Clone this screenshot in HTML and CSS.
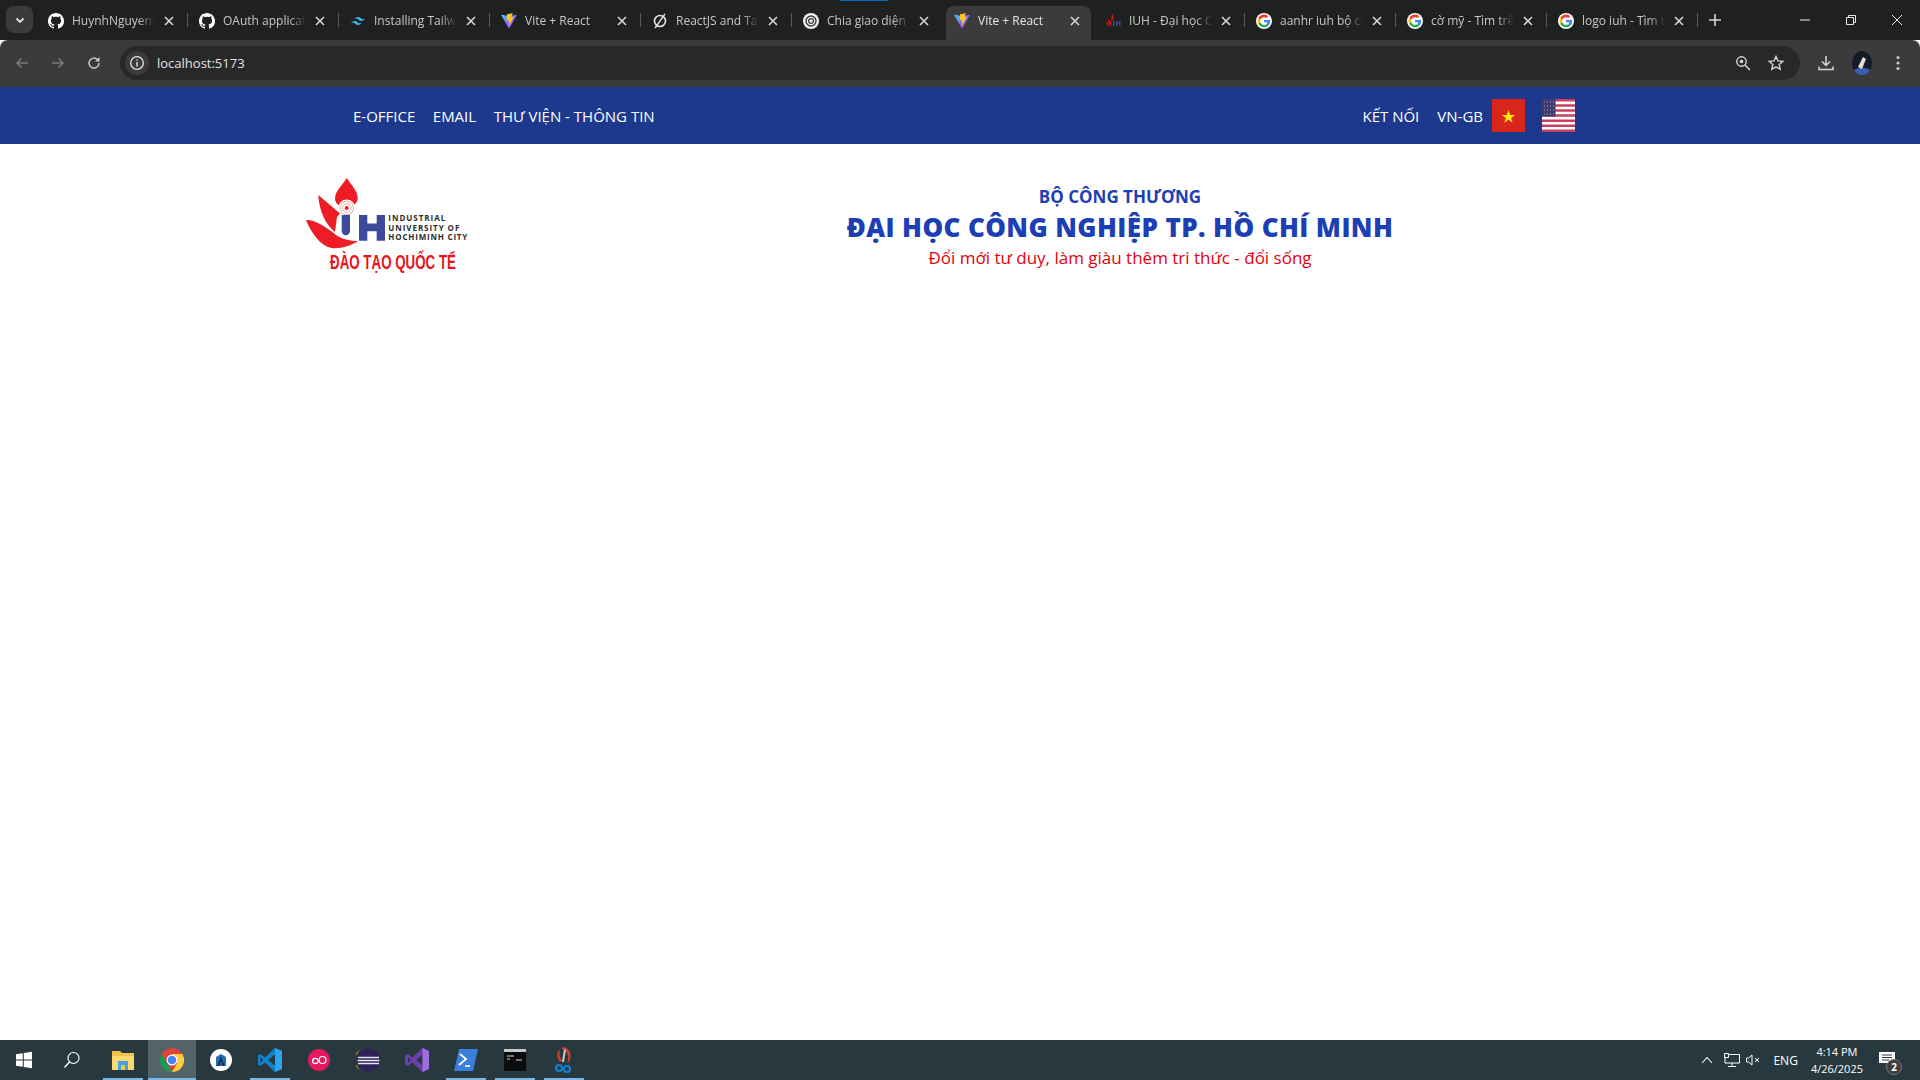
FILE: index.html
```html
<!DOCTYPE html>
<html lang="en">
<head>
    <meta charset="UTF-8">
    <meta name="viewport" content="width=device-width, initial-scale=1.0">
    <title>Vite + React</title>
    <link rel="stylesheet" href="styles.css">
</head>
<body>
    <svg class="sprites" aria-hidden="true">
        <defs>
            <linearGradient id="viteBody" x1="0" y1="0" x2="1" y2="1">
                <stop offset="0" stop-color="#41d1ff"/>
                <stop offset="0.5" stop-color="#7c6cff"/>
                <stop offset="1" stop-color="#bd34fe"/>
            </linearGradient>
            <symbol id="i-github" viewBox="0 0 16 16">
                <path fill="#fff" d="M8 0C3.58 0 0 3.58 0 8c0 3.54 2.29 6.53 5.47 7.59.4.07.55-.17.55-.38 0-.19-.01-.82-.01-1.49-2.01.37-2.53-.49-2.69-.94-.09-.23-.48-.94-.82-1.13-.28-.15-.68-.52-.01-.53.63-.01 1.08.58 1.23.82.72 1.21 1.87.87 2.33.66.07-.52.28-.87.51-1.07-1.78-.2-3.64-.89-3.64-3.95 0-.87.31-1.59.82-2.15-.08-.2-.36-1.02.08-2.12 0 0 .67-.21 2.2.82.64-.18 1.32-.27 2-.27.68 0 1.36.09 2 .27 1.53-1.04 2.2-.82 2.2-.82.44 1.1.16 1.92.08 2.12.51.56.82 1.27.82 2.15 0 3.07-1.87 3.75-3.65 3.95.29.25.54.73.54 1.48 0 1.07-.01 1.93-.01 2.2 0 .21.15.46.55.38A8.013 8.013 0 0016 8c0-4.42-3.58-8-8-8z"/>
            </symbol>
            <symbol id="i-tailwind" viewBox="0 0 24 24">
                <path fill="#38bdf8" d="M12 6c-2.67 0-4.33 1.33-5 4 1-1.33 2.17-1.83 3.5-1.5.76.19 1.31.74 1.91 1.35.98 1 2.09 2.15 4.59 2.15 2.67 0 4.33-1.33 5-4-1 1.33-2.17 1.83-3.5 1.5-.76-.19-1.31-.74-1.91-1.35C15.61 7.15 14.51 6 12 6zM7 12c-2.67 0-4.33 1.33-5 4 1-1.33 2.17-1.83 3.5-1.5.76.19 1.31.74 1.91 1.35C8.39 16.85 9.49 18 12 18c2.67 0 4.33-1.33 5-4-1 1.33-2.17 1.83-3.5 1.5-.76-.19-1.31-.74-1.91-1.35C10.61 13.15 9.51 12 7 12z"/>
            </symbol>
            <symbol id="i-vite" viewBox="0 0 410 404">
                <path fill="url(#viteBody)" d="M399.641 59.5246L215.643 388.545C211.844 395.338 202.084 395.378 198.228 388.618L10.5817 59.5563C6.38087 52.1896 12.6802 43.2665 21.0281 44.7586L205.223 77.6824C206.398 77.8924 207.601 77.8904 208.776 77.6763L389.119 44.8058C397.439 43.2894 403.768 52.1434 399.641 59.5246Z"/>
                <path fill="#ffc517" d="M292.965 1.5744L156.801 28.2552C154.563 28.6937 152.906 30.5903 152.771 32.8664L144.395 174.33C144.198 177.662 147.258 180.248 150.51 179.498L188.42 170.749C191.967 169.931 195.172 173.055 194.443 176.622L183.18 231.775C182.422 235.487 185.907 238.661 189.532 237.56L212.947 230.446C216.577 229.344 220.065 232.527 219.297 236.242L201.398 322.875C200.278 328.294 207.486 331.249 210.492 326.603L212.5 323.5L323.454 102.072C325.312 98.3645 322.108 94.137 318.036 94.9228L279.014 102.454C275.347 103.161 272.227 99.746 273.262 96.1583L298.731 7.86689C299.767 4.27314 296.636 0.855181 292.965 1.5744Z"/>
            </symbol>
            <symbol id="i-google" viewBox="-6 -6 60 60">
                <circle cx="24" cy="24" r="30" fill="#fff"/>
                <path fill="#EA4335" d="M24 9.5c3.54 0 6.71 1.22 9.21 3.6l6.85-6.85C35.9 2.38 30.47 0 24 0 14.62 0 6.51 5.38 2.56 13.22l7.98 6.19C12.43 13.72 17.74 9.5 24 9.5z"/>
                <path fill="#4285F4" d="M46.98 24.55c0-1.57-.15-3.09-.38-4.55H24v9.02h12.94c-.58 2.96-2.26 5.48-4.78 7.18l7.73 6c4.51-4.18 7.09-10.36 7.09-17.65z"/>
                <path fill="#FBBC05" d="M10.53 28.59c-.48-1.45-.76-2.99-.76-4.59s.27-3.14.76-4.59l-7.98-6.19C.92 16.46 0 20.12 0 24c0 3.88.92 7.54 2.56 10.78l7.97-6.19z"/>
                <path fill="#34A853" d="M24 48c6.48 0 11.93-2.13 16.06-5.81l-7.73-6c-2.15 1.45-4.92 2.3-8.33 2.3-6.26 0-11.57-4.22-13.47-9.91l-7.98 6.19C6.51 42.62 14.62 48 24 48z"/>
            </symbol>
            <symbol id="i-close" viewBox="0 0 16 16">
                <path d="M4 4l8 8M12 4l-8 8" stroke="#d6d6d6" stroke-width="1.6" fill="none"/>
            </symbol>
        </defs>
    </svg>

    <div class="tabstrip">
        <div class="tab-search">
            <svg width="12" height="12" viewBox="0 0 12 12"><path d="M2.5 4.5L6 8l3.5-3.5" stroke="#e3e3e3" stroke-width="1.8" fill="none"/></svg>
        </div>
        <div class="tab"><svg class="favicon"><use href="#i-github"/></svg><span class="tab-title">HuynhNguyenHuu</span><svg class="tab-close"><use href="#i-close"/></svg></div>
        <div class="tab"><svg class="favicon"><use href="#i-github"/></svg><span class="tab-title">OAuth applications</span><svg class="tab-close"><use href="#i-close"/></svg></div>
        <div class="tab"><svg class="favicon"><use href="#i-tailwind"/></svg><span class="tab-title">Installing Tailwind</span><svg class="tab-close"><use href="#i-close"/></svg></div>
        <div class="tab"><svg class="favicon"><use href="#i-vite"/></svg><span class="tab-title">Vite + React</span><svg class="tab-close"><use href="#i-close"/></svg></div>
        <div class="tab">
            <svg class="favicon" viewBox="0 0 16 16"><circle cx="8" cy="8" r="5.5" fill="none" stroke="#e3e3e3" stroke-width="1.6"/><path d="M3 15L13 1" stroke="#e3e3e3" stroke-width="1.3"/></svg>
            <span class="tab-title">ReactJS and Tailwind</span><svg class="tab-close"><use href="#i-close"/></svg>
        </div>
        <div class="tab tab-loading tab-before-active">
            <svg class="favicon" viewBox="0 0 16 16"><circle cx="8" cy="8" r="8" fill="#f2f2f2"/><circle cx="8" cy="8" r="5" fill="none" stroke="#3a3a3a" stroke-width="1.4"/><circle cx="8" cy="8" r="2.4" fill="none" stroke="#3a3a3a" stroke-width="1.2"/></svg>
            <span class="tab-title">Chia giao diện thành</span><svg class="tab-close"><use href="#i-close"/></svg>
        </div>
        <div class="tab tab-active"><svg class="favicon"><use href="#i-vite"/></svg><span class="tab-title">Vite + React</span><svg class="tab-close"><use href="#i-close"/></svg></div>
        <div class="tab">
            <svg class="favicon" viewBox="0 0 16 16"><path d="M7 1c2 2 2 4 1 6L6 9 3 6c0 4 2 6 4 7H4c-2-1-3-3-3-5l5 6z" fill="#e0131b"/><path d="M8 8h1.500v5H8zM11 8h1.500v2H14V8h1.500v5H14v-2h-1.500v2H11z" fill="#3b4a9b"/></svg>
            <span class="tab-title">IUH - Đại học Công</span><svg class="tab-close"><use href="#i-close"/></svg>
        </div>
        <div class="tab"><svg class="favicon"><use href="#i-google"/></svg><span class="tab-title">aanhr iuh bộ công</span><svg class="tab-close"><use href="#i-close"/></svg></div>
        <div class="tab"><svg class="favicon"><use href="#i-google"/></svg><span class="tab-title">cờ mỹ - Tìm trên</span><svg class="tab-close"><use href="#i-close"/></svg></div>
        <div class="tab"><svg class="favicon"><use href="#i-google"/></svg><span class="tab-title">logo iuh - Tìm trên</span><svg class="tab-close"><use href="#i-close"/></svg></div>
        <svg class="new-tab" width="14" height="14" viewBox="0 0 14 14"><path d="M7 1v12M1 7h12" stroke="#d6d6d6" stroke-width="1.6"/></svg>
        <div class="window-controls">
            <div class="window-btn"><svg width="12" height="12" viewBox="0 0 12 12"><path d="M1 6h10" stroke="#e8e8e8"/></svg></div>
            <div class="window-btn"><svg width="12" height="12" viewBox="0 0 12 12"><path d="M1.500 3.500h7v7h-7zM3.500 3.500v-2h7v7h-2" stroke="#e8e8e8" fill="none"/></svg></div>
            <div class="window-btn"><svg width="12" height="12" viewBox="0 0 12 12"><path d="M1 1l10 10M11 1L1 11" stroke="#e8e8e8"/></svg></div>
        </div>
    </div>

    <div class="toolbar">
        <svg class="tool tool-back" viewBox="0 0 16 16"><path d="M14 8H3M7.500 3.500L3 8l4.500 4.500" stroke="#7b7b7b" stroke-width="1.500" fill="none"/></svg>
        <svg class="tool tool-forward" viewBox="0 0 16 16"><path d="M2 8h11M8.500 3.500L13 8l-4.500 4.500" stroke="#7b7b7b" stroke-width="1.500" fill="none"/></svg>
        <svg class="tool tool-reload" viewBox="0 0 16 16"><path d="M13 8a5 5 0 1 1-1.500-3.500L13 6" stroke="#c9c9c9" stroke-width="1.500" fill="none"/><path d="M13.500 2v4.500H9z" fill="#c9c9c9"/></svg>
        <div class="omnibox">
            <div class="site-info">
                <svg width="16" height="16" viewBox="0 0 16 16"><circle cx="8" cy="8" r="6.300" fill="none" stroke="#e3e3e3" stroke-width="1.300"/><path d="M8 7v4.500M8 4.500v1.300" stroke="#e3e3e3" stroke-width="1.400"/></svg>
            </div>
            <span class="url">localhost:5173</span>
            <svg class="tool tool-zoom" viewBox="0 0 16 16"><circle cx="6.500" cy="6.500" r="4.700" fill="none" stroke="#d6d6d6" stroke-width="1.400"/><circle cx="6.500" cy="6.500" r="1.800" fill="#d6d6d6"/><path d="M10 10l5 5" stroke="#d6d6d6" stroke-width="1.500"/></svg>
            <svg class="tool tool-star" viewBox="0 0 16 16"><path d="M8 1.500l2 4.400 4.800.5-3.600 3.200 1 4.700L8 11.900l-4.200 2.400 1-4.700L1.200 6.400 6 5.900z" fill="none" stroke="#d6d6d6" stroke-width="1.400"/></svg>
        </div>
        <svg class="tool tool-download" viewBox="0 0 16 16"><path d="M8 1v9M4 6.500L8 10.500l4-4M1 11.500v3h14v-3" stroke="#d6d6d6" stroke-width="1.500" fill="none"/></svg>
        <svg class="avatar" width="20" height="24" viewBox="0 0 20 24"><ellipse cx="10" cy="12" rx="10" ry="12" fill="#151a2a"/><path d="M2 19c4-3 12-3 16 0-2 4-5 5-8 5s-6-1-8-5z" fill="#3d5bb0"/><path d="M6 16l5-10 3 2-4 10z" fill="#e8e0d8"/></svg>
        <svg class="tool tool-menu" viewBox="0 0 16 16"><circle cx="8" cy="2.500" r="1.600" fill="#c9c9c9"/><circle cx="8" cy="8" r="1.600" fill="#c9c9c9"/><circle cx="8" cy="13.500" r="1.600" fill="#c9c9c9"/></svg>
    </div>

    <nav class="site-nav">
        <a href="#">E-OFFICE</a>
        <a href="#">EMAIL</a>
        <a href="#">THƯ VIỆN - THÔNG TIN</a>
        <div class="nav-right">
            <a href="#">KẾT NỐI</a>
            <a href="#">VN-GB</a>
            <svg class="flag flag-vn" width="33" height="33" viewBox="0 0 33 33">
                <rect width="33" height="33" fill="#da251d"/>
                <path d="M16.500 7l2.700 8.200h8.600l-7 5 2.700 8.200-7-5-7 5 2.700-8.200-7-5h8.600z" transform="translate(16.500 17) scale(.6) translate(-16.500 -17)" fill="#ffec00"/>
            </svg>
            <svg class="flag" width="33" height="33" viewBox="0 0 33 33">
                <rect width="33" height="33" fill="#fff"/>
                <path d="M0 1.300h33M0 6.400h33M0 11.500h33M0 16.600h33M0 21.700h33M0 26.800h33M0 31.700h33" stroke="#c8405f" stroke-width="2.500"/>
                <rect width="13.500" height="17.500" fill="#3c3b6e"/>
                <path d="M2 3h10M2 7h10M2 11h10M2 15h10" stroke="#a9a9c9" stroke-width="1" stroke-dasharray="1 2"/>
            </svg>
        </div>
    </nav>

    <header class="site-header">
        <svg class="logo" width="180" height="100" viewBox="0 0 180 100">
            <path d="M46.700 3C51 10 58 16 57.700 23.500 57.500 29 52 32 46 32 39.500 32 35 28.500 35 23.500 35 16 43 10 46.700 3z" fill="#ee1c25"/>
            <path d="M18.300 20L40 38.500 37 42 35 57C26 50 19 36 18.300 20z" fill="#ee1c25"/>
            <path d="M6 45C17 45 27 53 36 60 42 64 50 66 58.300 66 50 71 41 74 32 73 20 71 11 57 6 45z" fill="#ee1c25"/>
            <circle cx="46.700" cy="33" r="8.500" fill="#fff"/>
            <circle cx="46.700" cy="33" r="6.800" fill="none" stroke="#e9a8a8" stroke-width="1"/>
            <circle cx="46.700" cy="33" r="4.300" fill="none" stroke="#e9a8a8" stroke-width="1"/>
            <circle cx="46.700" cy="33" r="2" fill="#ee1c25"/>
            <path d="M41.700 40h8.300v16a4 4 0 0 1-8.300 0z" fill="#3b4a9b"/>
            <path d="M59 40h8.300v8.500h9.400V40H85v25.700h-8.300v-9.500h-9.400v9.500H59z" fill="#3b4a9b"/>
            <text class="logo-en" x="88.300" y="45.700" textLength="57">INDUSTRIAL</text>
            <text class="logo-en" x="88.300" y="55.700" textLength="71">UNIVERSITY OF</text>
            <text class="logo-en" x="88.300" y="65.300" textLength="79">HOCHIMINH CITY</text>
            <text class="logo-vn" x="30" y="94" textLength="126" lengthAdjust="spacingAndGlyphs">ĐÀO TẠO QUỐC TẾ</text>
        </svg>
        <div class="site-title">
            <div class="title-ministry">BỘ CÔNG THƯƠNG</div>
            <div class="title-school">ĐẠI HỌC CÔNG NGHIỆP TP. HỒ CHÍ MINH</div>
            <div class="title-motto">Đổi mới tư duy, làm giàu thêm tri thức - đổi sống</div>
        </div>
    </header>

    <main class="content"></main>

    <footer class="taskbar">
        <div class="task-btn">
            <svg width="18" height="18" viewBox="0 0 18 18"><path d="M1 3.200l6.800-1v6.300H1zM8.800 2l8.200-1.200v7.700H8.800zM1 9.500h6.800v6.300l-6.800-1zM8.800 9.500H17v7.700L8.800 16z" fill="#fff"/></svg>
        </div>
        <div class="task-btn">
            <svg width="18" height="18" viewBox="0 0 18 18"><circle cx="10.500" cy="7" r="5.500" fill="none" stroke="#fff" stroke-width="1.200"/><path d="M6.500 11L1.500 16.500" stroke="#fff" stroke-width="1.400"/></svg>
        </div>
        <div class="task-app running">
            <svg width="22" height="20" viewBox="0 0 22 20"><path d="M0 1h8l2 2h12v17H0z" fill="#f3c04a"/><path d="M0 6h22v14H0z" fill="#fbd96e"/><path d="M6 11h10v9H6z" fill="#3fa4e0"/><path d="M9 15h4v5H9z" fill="#f3c04a"/></svg>
        </div>
        <div class="task-app running active">
            <svg width="24" height="24" viewBox="0 0 24 24"><circle cx="12" cy="12" r="12" fill="#db4437"/><path d="M12 24a12 12 0 0 1-10.400-18L7 15z" fill="#0f9d58"/><path d="M12 6h10.400A12 12 0 0 1 12 24l5.200-9z" fill="#ffcd40"/><circle cx="12" cy="12" r="5.500" fill="#fff"/><circle cx="12" cy="12" r="4.300" fill="#4285f4"/></svg>
        </div>
        <div class="task-app">
            <svg width="22" height="22" viewBox="0 0 22 22"><circle cx="11" cy="11" r="11" fill="#fff"/><path d="M6 8l5-3 5 3v9H6z" fill="#1f6fb5"/><path d="M11 7l-3.500 10h1.600l1.900-5.500 1.900 5.500h1.600z" fill="#10253f"/></svg>
        </div>
        <div class="task-app running">
            <svg width="24" height="24" viewBox="0 0 24 24"><path d="M17 0l7 3v18l-7 3-10-9.500L2.500 18 0 16.500v-9L2.500 6 7 9.500z" fill="#0e82cc"/><path d="M17 6.500L10 12l7 5.500z" fill="#263a42"/><path d="M17 0l7 3v18l-7 3z" fill="#2aa5ee"/><path d="M2.500 9v6L5 12z" fill="#263a42"/></svg>
        </div>
        <div class="task-app">
            <svg width="22" height="22" viewBox="0 0 22 22"><circle cx="11" cy="11" r="11" fill="#e5195f"/><circle cx="7.300" cy="12" r="2.700" fill="none" stroke="#fff" stroke-width="1.200"/><circle cx="14.500" cy="11" r="3.500" fill="none" stroke="#fff" stroke-width="1.200"/></svg>
        </div>
        <div class="task-app">
            <svg width="24" height="24" viewBox="0 0 24 24"><circle cx="12.500" cy="12" r="11.500" fill="#2c2255"/><path d="M5 1.500A12.500 12.500 0 0 0 5 22.500 11.500 11.500 0 0 1 5 1.500z" fill="#f7941e"/><path d="M2 9.500h21M1.500 12.500h22M2 15.500h21" stroke="#e8e4f2" stroke-width="1.600"/></svg>
        </div>
        <div class="task-app">
            <svg width="24" height="24" viewBox="0 0 24 24"><path d="M17.500 0L24 3v18l-6.500 3-10-9.500L3 18l-3-1.500v-9L3 6l4.500 3.500z" fill="#6c3fb0"/><path d="M17.500 6.500L11 12l6.500 5.500z" fill="#263a42"/><path d="M17.500 0L24 3v18l-6.500 3z" fill="#9a6de0"/><path d="M3 9v6l3-3z" fill="#263a42"/></svg>
        </div>
        <div class="task-app running">
            <svg width="24" height="22" viewBox="0 0 24 22"><path d="M5 0h19l-5 22H0z" fill="#3a7fdb"/><path d="M6 5l6 5-7 6" stroke="#fff" stroke-width="1.800" fill="none"/><path d="M11 17h5" stroke="#fff" stroke-width="1.600"/></svg>
        </div>
        <div class="task-app running">
            <svg width="22" height="22" viewBox="0 0 22 22"><rect width="22" height="22" fill="#0c0c0c"/><rect width="22" height="3" fill="#c9c9c9"/><path d="M3 7h7M3 10h3M12 11h6" stroke="#d8d8d8"/></svg>
        </div>
        <div class="task-app running">
            <svg width="20" height="26" viewBox="0 0 20 26"><path d="M8 0C15 0 19 7 15 15l-2 1C16 9 13 3 8 2z" fill="#c8412e"/><path d="M4 4C2 9 4 13 7 15l1-2C6 11 5 8 6 3z" fill="#c8412e"/><path d="M10 2l2 1-2 12H8z" fill="#c9c9c9"/><circle cx="5" cy="21" r="3" fill="none" stroke="#1680d8" stroke-width="2"/><circle cx="13" cy="22" r="3" fill="none" stroke="#1680d8" stroke-width="2"/></svg>
        </div>
        <div class="tray">
            <svg class="tray-chevron" width="12" height="8" viewBox="0 0 12 8"><path d="M1 7l5-5.500L11 7" stroke="#fff" fill="none" stroke-width="1.100"/></svg>
            <svg class="tray-network" width="16" height="14" viewBox="0 0 16 14"><path d="M3.500 1.500H15.500V10H1V4M8 10v3M4 13.500h8" stroke="#fff" fill="none"/><path d="M.500.500h4v4h-4z" stroke="#fff" fill="#263a42"/></svg>
            <svg class="tray-volume" width="15" height="12" viewBox="0 0 15 12"><path d="M.500 4h2L6 1v10L2.500 8h-2z" stroke="#fff" fill="none"/><path d="M9 4l4 4M13 4l-4 4" stroke="#fff"/></svg>
            <span class="tray-lang">ENG</span>
            <div class="clock"><div>4:14 PM</div><div>4/26/2025</div></div>
            <div class="notify">
                <svg class="notify-icon" width="16" height="15" viewBox="0 0 16 15"><path d="M0 0h16v11h-3v4l-4-4H0z" fill="#fff"/><path d="M3 3h10M3 5.500h10M3 8h7" stroke="#263a42"/></svg>
                <span class="notify-count">2</span>
            </div>
        </div>
    </footer>
</body>
</html>
```

FILE: styles.css
```css
* {
    box-sizing: border-box;
}
html,
body {
    height: 100%;
}
body {
    margin: 0;
    display: flex;
    flex-direction: column;
    overflow: hidden;
    background-color: #fff;
    font-family: "Open Sans", "Noto Sans", Arial, sans-serif;
}
a {
    color: inherit;
    text-decoration: none;
}
svg {
    display: block;
    flex-shrink: 0;
}
.sprites {
    width: 0;
    height: 0;
    position: absolute;
}

/* browser tabs */
.tabstrip {
    height: 40px;
    display: flex;
    align-items: flex-end;
    background-color: #1f2121;
}
.tab-search {
    width: 27px;
    height: 27px;
    margin: 0 4px 7px 6px;
    display: flex;
    align-items: center;
    justify-content: center;
    border-radius: 8px;
    background-color: #3b3b3b;
}
.tab {
    position: relative;
    width: 151px;
    height: 34px;
    padding: 0 0 5px 11px;
    display: flex;
    align-items: center;
    color: #c7c7c7;
    font-size: 12px;
}
.tab::after {
    content: "";
    position: absolute;
    top: 7px;
    right: 0;
    width: 1px;
    height: 14px;
    background-color: #5a5a5a;
}
.tab-before-active::after,
.tab-active::after {
    display: none;
}
.tab-active {
    width: 145px;
    margin: 0 3px;
    padding-left: 8px;
    border-radius: 8px 8px 0 0;
    background-color: #3b3b3b;
    color: #e6e6e6;
}
.tab-loading::before {
    content: "";
    position: absolute;
    top: -6px;
    left: 48px;
    width: 48px;
    height: 1px;
    background-color: #0b6cc4;
}
.favicon {
    width: 16px;
    height: 16px;
    margin-right: 8px;
}
.tab-title {
    width: 83px;
    white-space: nowrap;
    overflow: hidden;
    -webkit-mask-image: linear-gradient(to right, #000 80%, transparent);
    mask-image: linear-gradient(to right, #000 80%, transparent);
}
.tab-close {
    width: 16px;
    height: 16px;
    margin-left: 6px;
}
.new-tab {
    margin: 0 0 13px 10px;
}
.window-controls {
    margin-left: auto;
    height: 40px;
    display: flex;
}
.window-btn {
    width: 46px;
    display: flex;
    align-items: center;
    justify-content: center;
}

/* address bar row */
.toolbar {
    height: 47px;
    padding: 0 14px 1px 14px;
    display: flex;
    align-items: center;
    border-radius: 8px 8px 0 0;
    background-color: #3b3b3b;
}
.tool {
    width: 16px;
    height: 16px;
}
.tool-forward,
.tool-reload {
    margin-left: 20px;
}
.omnibox {
    width: 1680px;
    height: 34px;
    margin-left: 18px;
    padding: 0 16px 0 5px;
    display: flex;
    align-items: center;
    border-radius: 17px;
    background-color: #282828;
}
.site-info {
    width: 24px;
    height: 24px;
    display: flex;
    align-items: center;
    justify-content: center;
    border-radius: 50%;
    background-color: #3b3b3b;
}
.url {
    margin-left: 8px;
    color: #e3e3e3;
    font-size: 13px;
}
.tool-zoom {
    margin-left: auto;
}
.tool-star {
    margin-left: 17px;
}
.tool-download {
    margin-left: 18px;
}
.avatar {
    margin-left: 18px;
}
.tool-menu {
    margin-left: 18px;
}

/* site nav */
.site-nav {
    height: 57px;
    padding: 0 345px 0 353px;
    display: flex;
    align-items: center;
    gap: 17.5px;
    background-color: #1c398e;
    color: #fff;
    font-size: 15px;
}
.site-nav a {
    padding-top: 1px;
}
.nav-right {
    margin-left: auto;
    display: flex;
    align-items: center;
    gap: 18px;
}
.flag-vn {
    margin: 0 -1px 0 -9px;
}

/* site header */
.site-header {
    padding: 31px 160px 0 300px;
    display: flex;
}
.logo-en {
    font-family: "Open Sans", sans-serif;
    font-size: 8px;
    font-weight: 700;
    fill: #2d2d2d;
}
.logo-vn {
    font-family: "Liberation Sans", sans-serif;
    font-size: 20px;
    font-weight: 700;
    fill: #e8131b;
}
.site-title {
    flex: 1;
    padding-top: 9px;
    text-align: center;
}
.title-ministry {
    color: #1c3fb5;
    font-size: 17px;
    font-weight: 700;
    line-height: 26px;
}
.title-school {
    color: #1c3fb5;
    font-size: 26px;
    font-weight: 800;
    letter-spacing: 0.4px;
    line-height: 34px;
}
.title-motto {
    margin-top: 1px;
    color: #e7000b;
    font-size: 17px;
    line-height: 26px;
}

.content {
    flex: 1;
}

/* windows taskbar */
.taskbar {
    height: 40px;
    display: flex;
    background-color: #28383f;
    color: #fff;
}
.task-btn {
    width: 48px;
    display: flex;
    align-items: center;
    justify-content: center;
}
.task-btn + .task-app {
    margin-left: 3px;
}
.task-app {
    position: relative;
    width: 48px;
    margin-right: 1px;
    display: flex;
    align-items: center;
    justify-content: center;
}
.running::after {
    content: "";
    position: absolute;
    left: 4px;
    right: 4px;
    bottom: 0;
    height: 2px;
    background-color: #76b9ed;
}
.active {
    background-color: #52636a;
}
.active::after {
    left: 0;
    right: 0;
}
.tray {
    flex: 1;
    display: flex;
    align-items: center;
    justify-content: flex-end;
    font-size: 12px;
}
.tray-network {
    margin-left: 11px;
}
.tray-volume {
    margin-left: 6px;
}
.tray-lang {
    margin-left: 12px;
}
.clock {
    margin-left: 13px;
    font-size: 11px;
    line-height: 17px;
    text-align: center;
}
.notify {
    position: relative;
    width: 48px;
    height: 40px;
    margin-right: 9px;
    display: flex;
    align-items: center;
    justify-content: center;
}
.notify-icon {
    margin-top: -2px;
}
.notify-count {
    position: absolute;
    top: 19px;
    left: 23px;
    width: 16px;
    height: 16px;
    border: 1px solid #777;
    border-radius: 50%;
    background-color: #3d3d3d;
    font-size: 10px;
    font-weight: 700;
    line-height: 14px;
    text-align: center;
}
```
